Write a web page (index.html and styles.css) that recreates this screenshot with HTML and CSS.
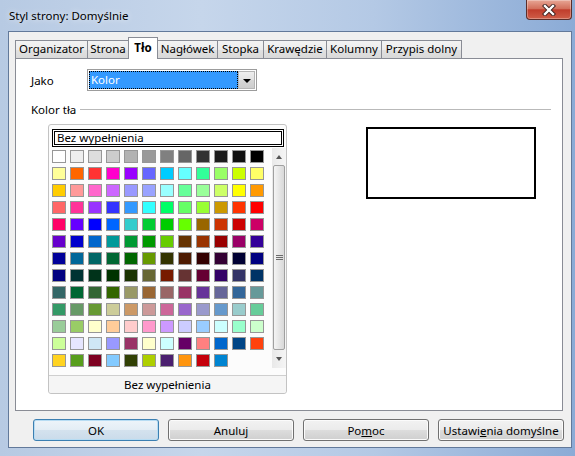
FILE: index.html
```html
<!DOCTYPE html>
<html lang="pl">
<head>
<meta charset="utf-8">
<title>Styl strony: Domyślnie</title>
<link rel="stylesheet" href="styles.css">
</head>
<body>
<div class="window">
  <div class="titlebar">
    <span class="title">Styl strony: Domyślnie</span>
    <div class="close">
      <svg width="14" height="12" viewBox="0 0 14 12"><path d="M3 2 L11 10 M11 2 L3 10" stroke="#3a1f1c" stroke-width="4.2" stroke-linecap="square"/><path d="M3 2 L11 10 M11 2 L3 10" stroke="#ffffff" stroke-width="2.4" stroke-linecap="square"/></svg>
    </div>
  </div>
  <div class="client">
    <div class="tabs">
      <div class="tab w-org">Organizator</div>
      <div class="tab w-str">Strona</div>
      <div class="tab sel w-tlo">Tło</div>
      <div class="tab w-nag">Nagłówek</div>
      <div class="tab w-sto">Stopka</div>
      <div class="tab w-kra">Krawędzie</div>
      <div class="tab w-kol">Kolumny</div>
      <div class="tab w-prz">Przypis dolny</div>
    </div>
    <div class="page">
      <div class="field-row">
        <span class="label"><u>J</u>ako</span>
        <div class="combo">
          <div class="combo-field">Kolor</div>
          <div class="combo-btn"><span class="arrow"></span></div>
        </div>
      </div>
      <div class="section-title"><span>Kolor tła</span><div class="rule"></div></div>
      <div class="content-row">
        <div class="palette">
          <div class="pal-top"><div class="pal-field">Bez wypełnienia</div></div>
          <div class="pal-body">
            <div class="grid">
              <div class="sw" style="background:#ffffff"></div><div class="sw" style="background:#eeeeee"></div><div class="sw" style="background:#dddddd"></div><div class="sw" style="background:#cccccc"></div><div class="sw" style="background:#b2b2b2"></div><div class="sw" style="background:#999999"></div><div class="sw" style="background:#808080"></div><div class="sw" style="background:#666666"></div><div class="sw" style="background:#333333"></div><div class="sw" style="background:#1c1c1c"></div><div class="sw" style="background:#111111"></div><div class="sw" style="background:#000000"></div>
              <div class="sw" style="background:#ffff99"></div><div class="sw" style="background:#ff6600"></div><div class="sw" style="background:#ff3333"></div><div class="sw" style="background:#ff00cc"></div><div class="sw" style="background:#9900ff"></div><div class="sw" style="background:#6666ff"></div><div class="sw" style="background:#00ccff"></div><div class="sw" style="background:#66ffff"></div><div class="sw" style="background:#33ff99"></div><div class="sw" style="background:#99ff66"></div><div class="sw" style="background:#ccff00"></div><div class="sw" style="background:#ffff66"></div>
              <div class="sw" style="background:#ffcc00"></div><div class="sw" style="background:#ff9999"></div><div class="sw" style="background:#ff66cc"></div><div class="sw" style="background:#cc66ff"></div><div class="sw" style="background:#9999ff"></div><div class="sw" style="background:#99a3ff"></div><div class="sw" style="background:#99ffff"></div><div class="sw" style="background:#66ff99"></div><div class="sw" style="background:#99ff99"></div><div class="sw" style="background:#ccff66"></div><div class="sw" style="background:#ffff00"></div><div class="sw" style="background:#ff9900"></div>
              <div class="sw" style="background:#ff6666"></div><div class="sw" style="background:#ff3399"></div><div class="sw" style="background:#9933ff"></div><div class="sw" style="background:#3333ff"></div><div class="sw" style="background:#3399ff"></div><div class="sw" style="background:#33ffff"></div><div class="sw" style="background:#00ff66"></div><div class="sw" style="background:#66ff66"></div><div class="sw" style="background:#99ff33"></div><div class="sw" style="background:#cc9900"></div><div class="sw" style="background:#ff3300"></div><div class="sw" style="background:#ff0000"></div>
              <div class="sw" style="background:#ff0066"></div><div class="sw" style="background:#6600ff"></div><div class="sw" style="background:#0000ff"></div><div class="sw" style="background:#0066ff"></div><div class="sw" style="background:#33cccc"></div><div class="sw" style="background:#00cc33"></div><div class="sw" style="background:#00cc00"></div><div class="sw" style="background:#66ff00"></div><div class="sw" style="background:#996600"></div><div class="sw" style="background:#cc3300"></div><div class="sw" style="background:#cc0000"></div><div class="sw" style="background:#cc0066"></div>
              <div class="sw" style="background:#6600cc"></div><div class="sw" style="background:#0000cc"></div><div class="sw" style="background:#0066cc"></div><div class="sw" style="background:#009999"></div><div class="sw" style="background:#009933"></div><div class="sw" style="background:#009900"></div><div class="sw" style="background:#66cc00"></div><div class="sw" style="background:#663300"></div><div class="sw" style="background:#993300"></div><div class="sw" style="background:#990000"></div><div class="sw" style="background:#990066"></div><div class="sw" style="background:#330099"></div>
              <div class="sw" style="background:#000099"></div><div class="sw" style="background:#006699"></div><div class="sw" style="background:#006666"></div><div class="sw" style="background:#006633"></div><div class="sw" style="background:#006600"></div><div class="sw" style="background:#669900"></div><div class="sw" style="background:#333300"></div><div class="sw" style="background:#4d1a00"></div><div class="sw" style="background:#330000"></div><div class="sw" style="background:#330033"></div><div class="sw" style="background:#000033"></div><div class="sw" style="background:#000080"></div>
              <div class="sw" style="background:#000080"></div><div class="sw" style="background:#003333"></div><div class="sw" style="background:#00331a"></div><div class="sw" style="background:#003300"></div><div class="sw" style="background:#1a3300"></div><div class="sw" style="background:#666633"></div><div class="sw" style="background:#771a00"></div><div class="sw" style="background:#663333"></div><div class="sw" style="background:#660033"></div><div class="sw" style="background:#330066"></div><div class="sw" style="background:#333366"></div><div class="sw" style="background:#003366"></div>
              <div class="sw" style="background:#336666"></div><div class="sw" style="background:#006633"></div><div class="sw" style="background:#336633"></div><div class="sw" style="background:#336600"></div><div class="sw" style="background:#999966"></div><div class="sw" style="background:#996633"></div><div class="sw" style="background:#996666"></div><div class="sw" style="background:#993366"></div><div class="sw" style="background:#663399"></div><div class="sw" style="background:#666699"></div><div class="sw" style="background:#336699"></div><div class="sw" style="background:#669999"></div>
              <div class="sw" style="background:#339966"></div><div class="sw" style="background:#669966"></div><div class="sw" style="background:#669933"></div><div class="sw" style="background:#cccc99"></div><div class="sw" style="background:#cc9966"></div><div class="sw" style="background:#cc9999"></div><div class="sw" style="background:#cc6699"></div><div class="sw" style="background:#9966cc"></div><div class="sw" style="background:#9999cc"></div><div class="sw" style="background:#6699cc"></div><div class="sw" style="background:#99cccc"></div><div class="sw" style="background:#66cc99"></div>
              <div class="sw" style="background:#99cc99"></div><div class="sw" style="background:#99cc66"></div><div class="sw" style="background:#ffffcc"></div><div class="sw" style="background:#ffcc99"></div><div class="sw" style="background:#ffcccc"></div><div class="sw" style="background:#ff99cc"></div><div class="sw" style="background:#cc99ff"></div><div class="sw" style="background:#ccccff"></div><div class="sw" style="background:#99ccff"></div><div class="sw" style="background:#ccffff"></div><div class="sw" style="background:#99ffcc"></div><div class="sw" style="background:#ccffcc"></div>
              <div class="sw" style="background:#ccff99"></div><div class="sw" style="background:#e6e6ff"></div><div class="sw" style="background:#cfe7f5"></div><div class="sw" style="background:#9999ff"></div><div class="sw" style="background:#993366"></div><div class="sw" style="background:#ffffcc"></div><div class="sw" style="background:#ccffff"></div><div class="sw" style="background:#660066"></div><div class="sw" style="background:#ff8080"></div><div class="sw" style="background:#0066cc"></div><div class="sw" style="background:#004586"></div><div class="sw" style="background:#ff420e"></div>
              <div class="sw" style="background:#ffd320"></div><div class="sw" style="background:#579d1c"></div><div class="sw" style="background:#7e0021"></div><div class="sw" style="background:#83caff"></div><div class="sw" style="background:#314004"></div><div class="sw" style="background:#aecf00"></div><div class="sw" style="background:#4b1f6f"></div><div class="sw" style="background:#ff950e"></div><div class="sw" style="background:#c5000b"></div><div class="sw" style="background:#0084d1"></div>
            </div>
            <div class="sb">
              <div class="sb-btn sb-up"><span class="tri-up"></span></div>
              <div class="sb-thumb">
                <svg width="7" height="6" viewBox="0 0 7 6"><path d="M0 0.5H7M0 2.5H7M0 4.5H7" stroke="#6b6b6b" stroke-width="1"/></svg>
              </div>
              <div class="sb-btn sb-down"><span class="tri-down"></span></div>
            </div>
          </div>
          <div class="pal-none">Bez wypełnienia</div>
        </div>
        <div class="preview"></div>
      </div>
    </div>
    <div class="buttons">
      <div class="btn default">OK</div>
      <div class="btn">Anuluj</div>
      <div class="btn">Po<u>m</u>oc</div>
      <div class="btn">Ustawi<u>e</u>nia domyślne</div>
    </div>
  </div>
</div>
</body>
</html>
```

FILE: styles.css
```css
html, body {
  margin: 0;
  padding: 0;
}
body {
  font-family: "Noto Sans", "DejaVu Sans", sans-serif;
  font-size: 11.5px;
  color: #000;
}
.window {
  width: 575px;
  height: 456px;
  overflow: hidden;
  display: flex;
  flex-direction: column;
  background: linear-gradient(to right, #b7cae3 0%, #c6d6eb 35%, #b4c9e5 65%, #8babd6 100%);
}
.titlebar {
  height: 31px;
  flex: none;
  display: flex;
  align-items: flex-start;
  padding-left: 9px;
  box-sizing: border-box;
}
.title {
  margin-top: 9px;
  line-height: 14px;
  text-shadow: 0 0 6px rgba(255, 255, 255, 0.9);
}
.close {
  margin-left: auto;
  margin-right: 3px;
  width: 46px;
  height: 20px;
  box-sizing: border-box;
  border: 1px solid #5b2e2a;
  border-top: none;
  border-radius: 0 0 4px 4px;
  background: linear-gradient(#e7a695, #d3705c 45%, #c03d2c 52%, #cf5e48);
  box-shadow: inset 0 0 0 1px rgba(255, 255, 255, 0.3);
  display: flex;
  align-items: center;
  justify-content: center;
}
.client {
  margin-left: 8px;
  width: 564px;
  height: 417px;
  flex: none;
  box-sizing: border-box;
  border: 1px solid #62799a;
  background: #f0f0f0;
  display: flex;
  flex-direction: column;
}
.tabs {
  display: flex;
  align-items: flex-end;
  height: 26px;
  margin-left: 6px;
}
.tab {
  height: 18px;
  box-sizing: border-box;
  border: 1px solid #898c95;
  border-bottom: none;
  margin-left: -1px;
  background: linear-gradient(#f3f3f3, #ececec 50%, #e1e1e1 51%, #d9d9d9);
  text-align: center;
  line-height: 16px;
  white-space: nowrap;
}
.tab:first-child { margin-left: 0; }
.tab.sel {
  height: 22px;
  margin-bottom: -1px;
  background: #fff;
  position: relative;
  z-index: 1;
  font-weight: bold;
  line-height: 19px;
}
.w-org { width: 73px; }
.w-str { width: 42px; }
.w-tlo { width: 30px; }
.w-nag { width: 61px; }
.w-sto { width: 47px; }
.w-kra { width: 64px; }
.w-kol { width: 56px; }
.w-prz { width: 81px; }
.page {
  width: 548px;
  height: 353px;
  box-sizing: border-box;
  border: 1px solid #898c95;
  background: #fff;
  margin-left: 6px;
  padding: 10px 11px 0 15px;
}
.field-row {
  display: flex;
  align-items: center;
  height: 22px;
}
.label { width: 56px; }
.combo {
  width: 170px;
  height: 22px;
  box-sizing: border-box;
  border: 1px solid #9c9c9c;
  padding: 1px;
  display: flex;
  background: #fff;
}
.combo-field {
  flex: 1;
  background: #3399ff;
  color: #fff;
  outline: 1px dotted #000;
  outline-offset: -1px;
  padding-left: 2px;
  line-height: 18px;
}
.combo-btn {
  width: 17px;
  box-sizing: border-box;
  border: 1px solid #b5b5b5;
  background: linear-gradient(#eeeeee, #e3e3e3 50%, #d6d6d6 51%, #cdcdcd);
  display: flex;
  align-items: center;
  justify-content: center;
}
.arrow {
  width: 0;
  height: 0;
  border-left: 4px solid transparent;
  border-right: 4px solid transparent;
  border-top: 4px solid #000;
  margin-top: 1px;
}
.section-title {
  display: flex;
  align-items: center;
  height: 24px;
  margin-top: 6px;
}
.rule {
  flex: 1;
  height: 1px;
  background: #b9b9b9;
  margin-left: 4px;
}
.content-row {
  display: flex;
  align-items: flex-start;
  margin-top: 3px;
  padding-left: 17px;
}
.palette {
  width: 239px;
  height: 270px;
  box-sizing: border-box;
  border: 1px solid #c3c3c3;
  border-radius: 3px;
  background: #fcfcfc;
  display: flex;
  flex-direction: column;
}
.pal-top { padding: 4px 2px 0 3px; }
.pal-field {
  height: 18px;
  box-sizing: border-box;
  border: 3px double #000;
  background: #fff;
  line-height: 12px;
  padding-left: 2px;
}
.pal-body {
  display: flex;
  height: 220px;
  margin-top: 1px;
  margin-left: 3px;
}
.grid {
  display: grid;
  grid-template-columns: repeat(12, 14px);
  grid-auto-rows: 13px;
  gap: 4px;
  margin-top: 2px;
  align-content: start;
}
.sw {
  box-sizing: border-box;
  border: 1px solid #979797;
}
.sb {
  margin-left: auto;
  width: 14px;
  display: flex;
  flex-direction: column;
  background: linear-gradient(to right, #e9e9e9, #f5f5f5);
}
.sb-btn {
  display: flex;
  align-items: center;
  justify-content: center;
}
.sb-up { height: 17px; }
.sb-down { height: 18px; }
.tri-up {
  width: 0;
  height: 0;
  border-left: 3.5px solid transparent;
  border-right: 3.5px solid transparent;
  border-bottom: 4px solid #555;
}
.tri-down {
  width: 0;
  height: 0;
  border-left: 3.5px solid transparent;
  border-right: 3.5px solid transparent;
  border-top: 4px solid #555;
}
.sb-thumb {
  flex: 1;
  margin: 0 1px;
  box-sizing: border-box;
  border: 1px solid #a0a0a0;
  border-radius: 2px;
  background: linear-gradient(to right, #f4f4f4, #e6e6e6 50%, #d9d9d9);
  display: flex;
  align-items: center;
  justify-content: center;
}
.pal-none {
  margin-top: 7px;
  border-top: 1px solid #cfcfcf;
  flex: 1;
  text-align: center;
  line-height: 17px;
  background: #f5f5f5;
  border-radius: 0 0 3px 3px;
}
.preview {
  margin-left: 79px;
  margin-top: 3px;
  width: 170px;
  height: 72px;
  box-sizing: border-box;
  border: 2px solid #000;
  background: #fff;
}
.buttons {
  display: flex;
  gap: 9px;
  margin-top: 8px;
  padding-left: 24px;
}
.btn {
  width: 126px;
  height: 22px;
  box-sizing: border-box;
  border: 1px solid #707070;
  border-radius: 3px;
  background: linear-gradient(#f2f2f2, #ebebeb 50%, #dddddd 51%, #cfcfcf);
  box-shadow: inset 0 0 0 1px #fbfbfb;
  display: flex;
  align-items: center;
  justify-content: center;
  white-space: nowrap;
}
.btn.default {
  border-color: #3c7fb1;
  background: linear-gradient(#edf4fa, #e3edf5 50%, #d4e2ee 51%, #cadbea);
  box-shadow: inset 0 0 0 1px #b7dcf3;
}
```
